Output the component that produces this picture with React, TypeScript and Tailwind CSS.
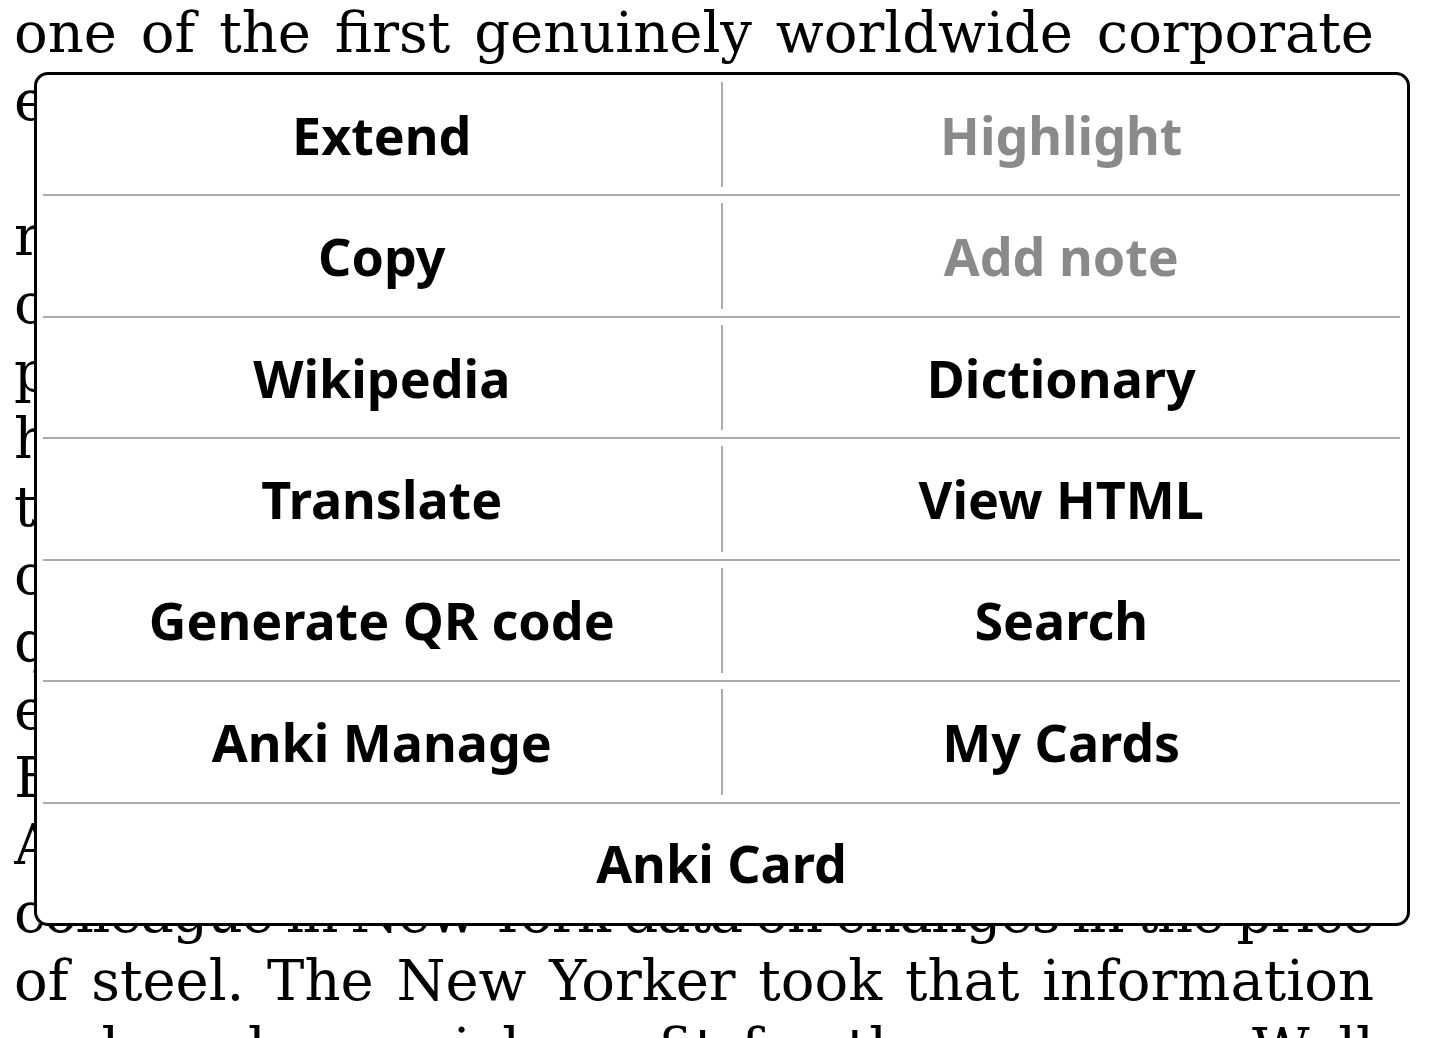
import React from "react";

type Action = { label: string; disabled?: boolean };

const rows: [Action, Action | null][] = [
  [{ label: "Extend" }, { label: "Highlight", disabled: true }],
  [{ label: "Copy" }, { label: "Add note", disabled: true }],
  [{ label: "Wikipedia" }, { label: "Dictionary" }],
  [{ label: "Translate" }, { label: "View HTML" }],
  [{ label: "Generate QR code" }, { label: "Search" }],
  [{ label: "Anki Manage" }, { label: "My Cards" }],
  [{ label: "Anki Card" }, null],
];

const ActionCell = ({ action }: { action: Action }) => (
  <button
    className={
      "flex-1 flex items-center justify-center font-['Noto_Sans',sans-serif] font-bold text-[52px] " +
      (action.disabled ? "text-[#8a8a8a]" : "text-black")
    }
  >
    {action.label}
  </button>
);

const Line = ({ children, className = "" }: { children: React.ReactNode; className?: string }) => (
  <div className={"whitespace-nowrap text-justify [text-align-last:justify] " + className}>{children}</div>
);

export default function App() {
  return (
    <div className="relative w-full h-[1038px] overflow-hidden bg-white">
      <div className="ml-[14px] mt-[-1px] w-[1360px] font-['DejaVu_Serif',serif] text-[56px] leading-[67.7px] text-black">
        <Line>one of the first genuinely worldwide corporate</Line>
        <div className="whitespace-nowrap">enterprises in history.</div>
        <Line className="pl-[56px] overflow-hidden">In 1912, a Hamburg agent for the</Line>
        <Line className="overflow-hidden">received word of a coming shortage</Line>
        <Line className="overflow-hidden">carried by courier hours before all</Line>
        <Line className="overflow-hidden">profited handsomely on the market</Line>
        <Line className="overflow-hidden">heralding a new age, the telegraph</Line>
        <Line className="overflow-hidden">the same old game of private news.</Line>
        <Line className="overflow-hidden">crowded offices of trading firms, a</Line>
        <Line className="overflow-hidden">quotations and gossip in code, and</Line>
        <Line className="overflow-hidden">exchanges across the oceans. In an</Line>
        <Line className="overflow-hidden">Essen office one morning, a clerk</Line>
        <Line className="overflow-hidden">After lunch he cabled to his young</Line>
        <Line className="tracking-[-1.5px] [word-spacing:-4px]">
          colleague in New York data on changes in the price
        </Line>
        <Line>of steel. The New Yorker took that information</Line>
        <Line className="overflow-hidden">and made a quick profit for the company. Well</Line>
      </div>

      <div className="absolute left-[34px] top-[72px] w-[1376px] h-[854px] border-[3px] border-black rounded-[14px] bg-white flex flex-col pl-[6px] pr-[7px]">
        {rows.map(([left, right], i) => (
          <React.Fragment key={left.label}>
            {i > 0 && <div className="h-[2px] bg-[#aaaaaa]" />}
            <div className="flex-1 flex">
              <ActionCell action={left} />
              {right && (
                <>
                  <div className="w-[2px] my-[7px] bg-[#aaaaaa]" />
                  <ActionCell action={right} />
                </>
              )}
            </div>
          </React.Fragment>
        ))}
      </div>
    </div>
  );
}
